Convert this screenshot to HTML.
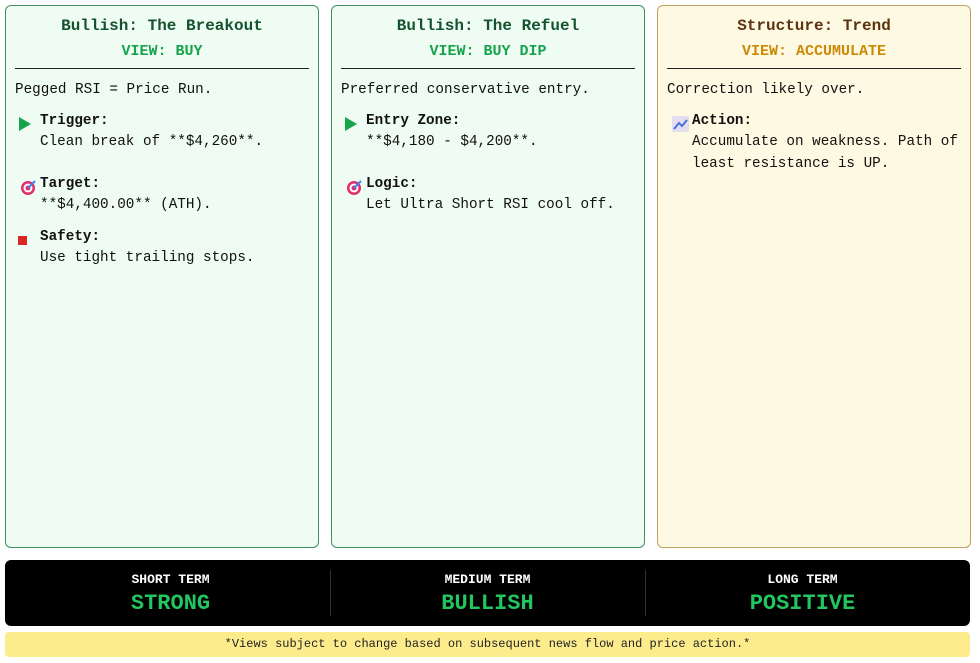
<!DOCTYPE html>
<html><head><meta charset="utf-8"><style>
*{margin:0;padding:0;box-sizing:border-box}
body{width:980px;height:663px;background:#fff;font-family:"Liberation Mono","DejaVu Sans Mono",monospace;color:#111;position:relative;overflow:hidden}
.card{position:absolute;top:5px;width:314px;height:543px;border:1px solid #3f8f5c;border-radius:6px;background:#effcf4}
.card.y{background:#fef9e3;border-color:#c2a060}
.t{position:absolute;left:0;right:0;text-align:center;font-weight:bold}
.h{top:11px;font-size:16px;color:#14532d}
.v{top:37px;font-size:15px;color:#16a34a}
.y .h{color:#5c3310}.y .v{color:#ca8a04}
.rule{position:absolute;left:9px;right:9px;top:62px;border-top:1px solid #222}
.l{position:absolute;left:9px;font-size:14.3px;white-space:nowrap;line-height:18px}
.i{left:34px}
.b{font-weight:bold}
.ic{position:absolute}
.bar{position:absolute;left:5px;top:560px;width:965px;height:66px;background:#000;border-radius:6px}
.col{position:absolute;top:0;width:321px;height:66px;text-align:center}
.col .a{position:absolute;top:12px;left:0;right:0;color:#fff;font-weight:bold;font-size:13px}
.col .c{position:absolute;top:31px;left:0;right:0;color:#22c55e;font-weight:bold;font-size:22px}
.sep{position:absolute;top:10px;width:1px;height:46px;background:#333}
.disc{position:absolute;left:5px;top:632px;width:965px;height:25px;background:#fdec8c;border-radius:4px;text-align:center;font-size:12px;line-height:25px;color:#222}
</style></head><body>
<div class="card" style="left:5px">
<div class="t h">Bullish: The Breakout</div><div class="t v">VIEW: BUY</div><div class="rule"></div>
<div class="l" style="top:75px">Pegged RSI = Price Run.</div>
<svg class="ic" style="left:13px;top:111px" width="12" height="14"><path d="M0 0L12 7L0 14Z" fill="#16a34a"/></svg>
<div class="l i b" style="top:106px">Trigger:</div>
<div class="l i" style="top:127px">Clean break of **$4,260**.</div>
<svg class="ic" style="left:14px;top:172px" width="18" height="18"><circle cx="8" cy="10" r="7" fill="#e0306a"/><circle cx="8" cy="10" r="4.5" fill="#fff"/><circle cx="8" cy="10" r="2.5" fill="#e0306a"/><path d="M8 10L15 3" stroke="#3b82f6" stroke-width="2"/></svg>
<div class="l i b" style="top:169px">Target:</div>
<div class="l i" style="top:190px">**$4,400.00** (ATH).</div>
<div class="ic" style="left:12px;top:230px;width:9px;height:9px;background:#dc2626"></div>
<div class="l i b" style="top:222px">Safety:</div>
<div class="l i" style="top:243px">Use tight trailing stops.</div>
</div>
<div class="card" style="left:331px">
<div class="t h">Bullish: The Refuel</div><div class="t v">VIEW: BUY DIP</div><div class="rule"></div>
<div class="l" style="top:75px">Preferred conservative entry.</div>
<svg class="ic" style="left:13px;top:111px" width="12" height="14"><path d="M0 0L12 7L0 14Z" fill="#16a34a"/></svg>
<div class="l i b" style="top:106px">Entry Zone:</div>
<div class="l i" style="top:127px">**$4,180 - $4,200**.</div>
<svg class="ic" style="left:14px;top:172px" width="18" height="18"><circle cx="8" cy="10" r="7" fill="#e0306a"/><circle cx="8" cy="10" r="4.5" fill="#fff"/><circle cx="8" cy="10" r="2.5" fill="#e0306a"/><path d="M8 10L15 3" stroke="#3b82f6" stroke-width="2"/></svg>
<div class="l i b" style="top:169px">Logic:</div>
<div class="l i" style="top:190px">Let Ultra Short RSI cool off.</div>
</div>
<div class="card y" style="left:657px">
<div class="t h">Structure: Trend</div><div class="t v">VIEW: ACCUMULATE</div><div class="rule"></div>
<div class="l" style="top:75px">Correction likely over.</div>
<svg class="ic" style="left:14px;top:110px" width="17" height="16"><rect width="17" height="16" rx="2" fill="#e4dcef"/><path d="M2 13L7 7L10 10L15 4" stroke="#3b6fd8" stroke-width="1.8" fill="none"/></svg>
<div class="l i b" style="top:106px">Action:</div>
<div class="l i" style="top:127px">Accumulate on weakness. Path of</div>
<div class="l i" style="top:149px">least resistance is UP.</div>
</div>
<div class="bar">
<div class="col" style="left:5px"><div class="a">SHORT TERM</div><div class="c">STRONG</div></div>
<div class="sep" style="left:325px"></div>
<div class="col" style="left:322px"><div class="a">MEDIUM TERM</div><div class="c">BULLISH</div></div>
<div class="sep" style="left:640px"></div>
<div class="col" style="left:637px"><div class="a">LONG TERM</div><div class="c">POSITIVE</div></div>
</div>
<div class="disc">*Views subject to change based on subsequent news flow and price action.*</div>
</body></html>
